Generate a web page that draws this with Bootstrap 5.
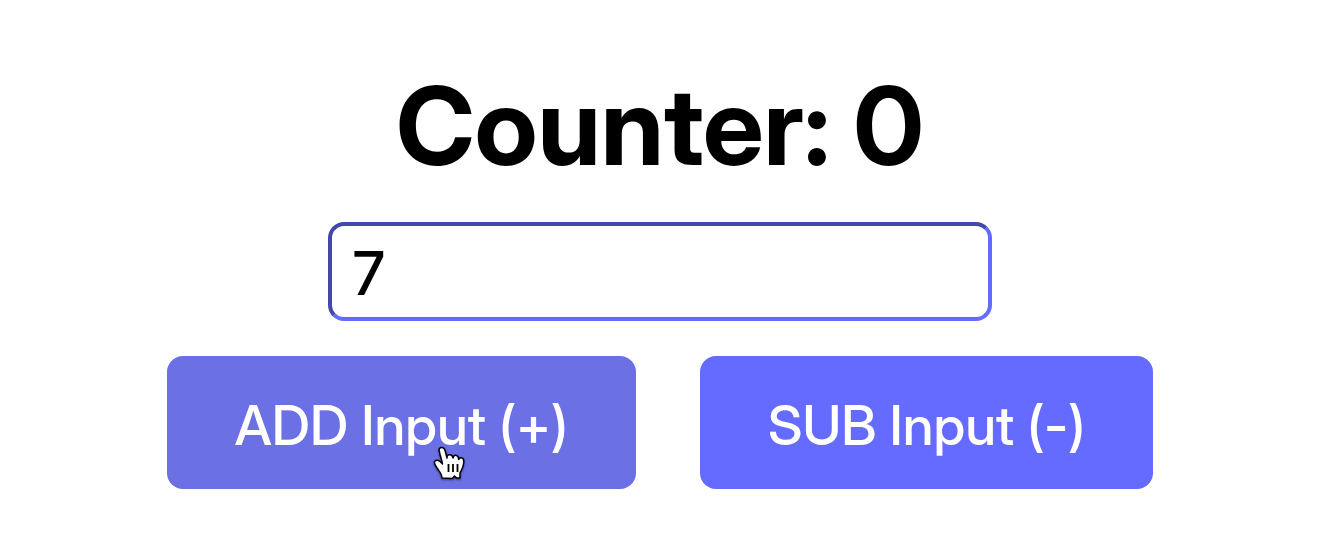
<!DOCTYPE html>
<html lang="en">
<head>
<meta charset="utf-8">
<meta name="viewport" content="width=device-width, initial-scale=1">
<title>Counter</title>
<link href="https://cdn.jsdelivr.net/npm/bootstrap@5.3.0/dist/css/bootstrap.min.css" rel="stylesheet">
<style>
body{font-family:"Inter Display","Inter Tight",Inter,sans-serif;color:#000;background:#fff}
main{padding-top:60px}
.counter-title{font-size:108px;line-height:132px;font-weight:700;margin-bottom:30px}
.counter-input,.counter-input:focus{width:50.3%;border:4px inset #646cff;border-radius:16px;padding:12px 21px 8px;font-size:60px;line-height:71px;font-weight:500;color:#000;box-shadow:none}
.counter-btn{--bs-btn-color:#fff;--bs-btn-bg:#656bff;--bs-btn-border-color:#656bff;--bs-btn-hover-color:#fff;--bs-btn-hover-bg:#6b70e4;--bs-btn-hover-border-color:#6b70e4;border-width:4px;border-radius:16px;padding:35px 64px 29px;font-size:55px;line-height:61px;font-weight:500}
.counter-btn.hovered{--bs-btn-bg:#6b70e4;--bs-btn-border-color:#6b70e4}
.button-row{column-gap:64px;row-gap:24px;margin-top:35px}
.pointer{left:259px;top:82px;filter:drop-shadow(0 1px 1px rgba(0,0,0,.45))}
</style>
</head>
<body>
<main class="d-flex flex-column align-items-center">
<h1 class="counter-title text-center">Counter: 0</h1>
<input class="form-control counter-input" type="text" value="7" aria-label="Amount">
<div class="button-row d-flex flex-wrap justify-content-center">
<button type="button" class="btn counter-btn hovered position-relative">ADD Input (+)
<svg class="pointer position-absolute pe-none" width="40" height="40" viewBox="0 0 40 40" aria-hidden="true">
<path d="M12 36 C12 32 9 29 7 26 C6 24 3 21 5 19 C7 17.500 10 19 12.500 22 C12 18 10 14 9.500 10 C8.500 7 9.500 5.500 12 5.500 C14.500 5.500 15 8 15.500 10 L17 16 C17 13.500 18 12.500 20 12.700 C22 12.700 22.700 14 23 16 C23.500 13.500 25 13 26.500 13.500 C28.500 14 28.500 16 28.700 17.500 C29.500 16 30.500 15.500 32 16 C34 16.500 34 19 33.500 22 C33 27 30.500 29 30 31 L30 36 L26.500 36 C25.500 35 25 34.500 24.500 34 C23.500 35.500 23 36 22 36.500 Z" fill="#fff" stroke="#000" stroke-width="1.500" stroke-linejoin="round"/>
<path d="M18.500 22 V30 M23 22 V30 M27.500 22 V30" fill="none" stroke="#000" stroke-width="1.800"/>
</svg></button>
<button type="button" class="btn counter-btn">SUB Input (-)</button>
</div>
</main>
<script src="https://cdn.jsdelivr.net/npm/bootstrap@5.3.0/dist/js/bootstrap.bundle.min.js"></script>
</body>
</html>
